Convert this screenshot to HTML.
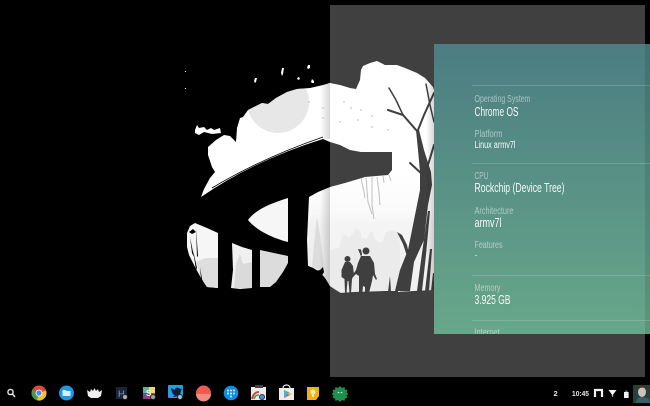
<!DOCTYPE html>
<html><head><meta charset="utf-8">
<style>
html,body{margin:0;padding:0;background:#000;width:650px;height:406px;overflow:hidden}
svg{display:block;font-family:"Liberation Sans",sans-serif}
</style></head>
<body>
<svg width="650" height="406" viewBox="0 0 650 406" xmlns="http://www.w3.org/2000/svg">
<defs>
<linearGradient id="sky" gradientUnits="userSpaceOnUse" x1="0" y1="175" x2="0" y2="295"><stop offset="0" stop-color="#fff"/><stop offset=".32" stop-color="#f8f8f8"/><stop offset=".4" stop-color="#f1f1f1"/><stop offset="1" stop-color="#ececec"/></linearGradient>
<linearGradient id="panel" x1="0" y1="0" x2="0" y2="1"><stop offset="0" stop-color="#4b7d82"/><stop offset="1" stop-color="#68a78a"/></linearGradient>
<linearGradient id="shade" x1="0" y1="0" x2="1" y2="0"><stop offset="0" stop-color="#000" stop-opacity="0"/><stop offset="1" stop-color="#000" stop-opacity=".16"/></linearGradient>
<clipPath id="pc"><rect x="434" y="44" width="216" height="290"/></clipPath>
<clipPath id="moon"><path d="M236 142L237 128 240 118 243 117 248 110 256 106 262 103 268 104 276 98 287 92 297 89 310 88 323 85 330 83 330 140 236 160Z"/></clipPath>
</defs>
<rect width="650" height="406" fill="#000"/>

<!-- wallpaper: upper white area -->
<path d="M201 197L204 189 210 178 215 172 212 167 208 155 208 147 216 140 224 135 230 136 236 142 237 128 240 118 243 117 248 110 256 106 262 103 268 104 276 98 287 92 297 89 310 88 323 85 330 83 340 85 350 88 356 89 360 80 361 70 363 66 370 63 377 61 385 65 397 65 405 68 417 73 425 78 433 87 434 90 434 175 388 175 392 170 392 152 361 152 350 150 340 145 330 142 323 139Q255 160 201 197Z" fill="#fff"/>
<circle cx="278" cy="102" r="31" fill="#e7e7e7" clip-path="url(#moon)"/>
<path d="M212 188Q262 158 323 137" fill="none" stroke="#000" stroke-width=".8"/>
<g fill="#fff">
<path d="M195 130L197 125 199 128 204 127 207 130 211 128 214 130 220 128 221 133 212 134 204 132 199 135 195 133Z"/>
<path d="M281 73l1-5 2 0-1 6-1 2zM307 68l1-3 2 0 0 3-2 1zM254 81l1-3 2 0-1 4-1 1zM297 78l2-1 1 2-2 1zM311 82l1-3 2 2 0 2-2 0z"/>
<rect x="185" y="71" width="1" height="1"/><rect x="185" y="88" width="1" height="1"/>
</g>

<!-- wallpaper: lower areas -->
<path d="M309 197L318 192 330 187 345 183 365 177 388 175 434 175 434 290 394 292 344 295 336 290 330 286 325 278 320 272 313 268 308 266 307 240Z" fill="url(#sky)"/>
<path d="M248 220C256 209 272 203 288 198L288 242C272 238 256 230 248 220Z" fill="#f6f6f6"/>
<path d="M187 233L190 226 195 223 207 228 218 233 218 288 207 287 201 278 195 267 189 255 187 247Z" fill="#f6f6f6"/>
<path d="M196 262L205 258 218 258 218 288 207 287 201 278Z" fill="#dedede"/>
<path d="M232 243L242 247 252 250 252 288 240 289 231 288 233 270Z" fill="#f0f0f0"/>
<path d="M234 288L236 264 240 254 243 264 252 262 252 288Z" fill="#dadada"/>
<path d="M260 250L274 253 288 256 288 263 283 272 276 282 270 287 260 287Z" fill="#dcdcdc"/>
<path d="M190 237l2 16 2 4-2-10ZM193 250l4 18-1 2ZM196 228l2 28-1 1ZM200 267l2 12 2 6-3-6Z" fill="#000"/>
<path d="M189 232l4-3 3 3-4 2Z" fill="#000"/>
<!-- city in window/fold -->
<path d="M312 267L314 245 317 217 320 235 322 250 324 272Z" fill="#dcdcdc"/>
<path d="M330 250L340 247 342 236 346 235 349 238 353 233 356 228 360 231 362 238 367 239 370 232 373 232 375 240 382 243 386 232 392 230 398 232 400 245 400 292 344 294 336 290 330 286Z" fill="#e4e4e4"/>
<path d="M308 266l5 2 3 3 4-1 3-3 1 5-3 5-4 2-3-6-6-4Z" fill="#000"/>

<!-- fold shadow -->
<rect x="320" y="84" width="10" height="55" fill="url(#shade)"/>
<rect x="320" y="186" width="10" height="98" fill="url(#shade)"/>

<!-- window dim -->
<rect x="330" y="5" width="315" height="372" fill="#fff" fill-opacity=".25"/>

<!-- vines -->
<g fill="none" stroke="#b0b0b0" stroke-width="1" opacity=".8">
<path d="M361 178l3 14 1 6M366 178l2 24 4 12M372 177l0 28 2 14M377 177l2 16 1 12M383 175l1 8M389 175l2 6"/>
</g>
<g fill="#d2d2d2">
<circle cx="344" cy="102" r="1"/><circle cx="351" cy="108" r="1"/><circle cx="361" cy="110" r="1"/><circle cx="372" cy="116" r="1"/><circle cx="358" cy="120" r="1"/><circle cx="340" cy="122" r="1"/><circle cx="372" cy="127" r="1"/><circle cx="388" cy="130" r="1"/><circle cx="309" cy="102" r="1"/><circle cx="323" cy="108" r="1"/><circle cx="323" cy="118" r="1"/>
</g>

<!-- tree -->
<g fill="#3f3f3f">
<path d="M395 291L400 270 408 250 415 215 420 190 420 172 418 150 416 130 419 130 424 150 431 172 432 185 428 205 424 240 414 262 410 291Z"/>
<path d="M417 291l5-38 6-42 2 0-4 44-4 36ZM425 291l5-42 2 0-3 42ZM431 291l2-18 1 0 0 18Z"/>
<path d="M397 232l5 3 5 10 3 14-3-3-4-12Z"/>
</g>
<g fill="none" stroke="#3f3f3f" stroke-linecap="round">
<path d="M417 131L403 115 388 110" stroke-width="2"/>
<path d="M403 115L396 100 389 88" stroke-width="1.500"/>
<path d="M418 130L424 115 434 93" stroke-width="2"/>
<path d="M426 84L430 105 434 122" stroke-width="1.500"/>
<path d="M410 163L423 175" stroke-width="2"/>
<path d="M434 145L428 165" stroke-width="2"/>
</g>
<!-- figures -->
<g fill="#3f3f3f">
<circle cx="347.500" cy="259" r="3"/>
<path d="M345 262l5 0 3 4 1 9-2 4-1 14-1.500 0-1-12-1 0-1 12-1.500 0-.5-14-3-2 0-7Z"/>
<circle cx="366" cy="251" r="3.500"/>
<path d="M358 249l3 .5 1 5-1 2Z"/>
<path d="M361 256l9 0 4 7 1 11 2 5-1 1-3-5-1 6-3 12-3 5-1 0 0-11-2-1-1 10-2 2-1 0 0-11 0-11-3-2-3 3-1-1 4-6 2-7Z"/>
<path d="M340 293l14-1 30-1 14 0 0 3-58 2Z"/>
<path d="M388 292l2-16 1 16Z"/>
</g>

<!-- panel -->
<rect x="426" y="84" width="8" height="206" fill="url(#shade)"/>
<rect x="434" y="44" width="216" height="290" fill="url(#panel)"/>
<rect x="645" y="44" width="5" height="290" fill="#000" opacity=".1"/>
<g stroke="#fff" stroke-opacity=".16" stroke-width="1">
<path d="M472 85.500H650M472 163.500H650M472 275.500H650M472 320.500H650"/>
</g>
<g clip-path="url(#pc)">
<g fill="#fff" fill-opacity=".5" font-size="10">
<text x="474.500" y="102" textLength="56" lengthAdjust="spacingAndGlyphs">Operating System</text>
<text x="474.500" y="137" textLength="28" lengthAdjust="spacingAndGlyphs">Platform</text>
<text x="474.500" y="179" textLength="14" lengthAdjust="spacingAndGlyphs">CPU</text>
<text x="474.500" y="214" textLength="39" lengthAdjust="spacingAndGlyphs">Architecture</text>
<text x="474.500" y="248" textLength="28" lengthAdjust="spacingAndGlyphs">Features</text>
<text x="474.500" y="291" textLength="26" lengthAdjust="spacingAndGlyphs">Memory</text>
<text x="474.500" y="335.500" textLength="25" lengthAdjust="spacingAndGlyphs">Internet</text>
</g>
<g fill="#fff" fill-opacity=".95" font-size="13">
<text x="474.500" y="116" textLength="44" lengthAdjust="spacingAndGlyphs">Chrome OS</text>
<text x="474.500" y="148" font-size="10" textLength="41" lengthAdjust="spacingAndGlyphs">Linux armv7l</text>
<text x="474.500" y="192" textLength="90" lengthAdjust="spacingAndGlyphs">Rockchip (Device Tree)</text>
<text x="474.500" y="227" textLength="27" lengthAdjust="spacingAndGlyphs">armv7l</text>
<text x="474.500" y="258" font-size="9" fill-opacity=".7">-</text>
<text x="474.500" y="304" textLength="36" lengthAdjust="spacingAndGlyphs">3.925 GB</text>
</g>
</g>

<!-- shelf icons -->
<g fill="none" stroke="#e8e8e8" stroke-width="1.400"><circle cx="10.500" cy="392" r="2.600"/><path d="M12.500 394l2.500 3"/></g>
<circle cx="39" cy="393" r="7.500" fill="#dd4a3b"/>
<path d="M39 393L32.500 389.500A7.500 7.500 0 0 0 37 400.300Z" fill="#3f9d4d"/>
<path d="M39 393L37 400.300A7.500 7.500 0 0 0 46 390.500Z" fill="#f0c02e"/>
<circle cx="39" cy="393" r="3.400" fill="#fff"/><circle cx="39" cy="393" r="2.600" fill="#4a8af0"/>
<circle cx="66.500" cy="393" r="7.500" fill="#1c97e0"/>
<path d="M62.500 390h3l1 1h4v5h-8Z" fill="#d8eefb"/>
<path d="M87 390l3 2 1-3 2 2 1.500-3 1.500 3 2-2 1 3 3-2-1 6-3 2h-7l-3-2Z" fill="#f0f0f0"/>
<rect x="116" y="387" width="11" height="12" fill="#17263a"/>
<text x="118" y="397" font-size="9" fill="#8fa0b4">H</text>
<circle cx="125" cy="397" r="3" fill="#222"/><circle cx="125" cy="397" r="2" fill="#a8b4b4"/>
<rect x="143" y="387" width="12" height="12" fill="#e8d96a"/>
<rect x="143" y="387" width="6" height="6" fill="#55b9a0"/>
<rect x="149" y="393" width="6" height="6" fill="#d23b6a"/>
<rect x="143" y="393" width="6" height="6" fill="#7a4a8a"/>
<text x="146" y="396" font-size="8" font-weight="bold" fill="#fff">S</text>
<circle cx="153" cy="397" r="3" fill="#222"/><circle cx="153" cy="397" r="2" fill="#8ab09a"/>
<rect x="168" y="385" width="15" height="13" rx="1" fill="#1f9fe6"/>
<path d="M171 388l4 2c0-3 4-3 5-1l2-.5-1 2c0 4-4 7-9 6 2 0 3-1 3-1-2-.5-3-3-4-7Z" fill="#0a2030"/>
<circle cx="180" cy="397" r="3" fill="#222"/><circle cx="180" cy="397" r="2" fill="#9fc0cc"/>
<circle cx="203.500" cy="393" r="7.500" fill="#ee5b4c"/>
<path d="M196 394h15a7.500 7.500 0 0 1-15 0Z" fill="#f28b80"/>
<circle cx="231" cy="393" r="7.300" fill="#0f8fe2"/>
<g fill="#d7eefc"><circle cx="228" cy="390.500" r="1"/><circle cx="231" cy="390.500" r="1"/><circle cx="234" cy="390.500" r="1"/><circle cx="228" cy="393.500" r="1"/><circle cx="231" cy="393.500" r="1"/><circle cx="234" cy="393.500" r="1"/><circle cx="231" cy="396.500" r="1"/></g>
<rect x="251" y="387" width="15" height="13" fill="#ececec"/>
<path d="M255 385l8 0 0 3-8 0Z" fill="#444"/>
<path d="M252 399c1-5 4-7 7-7" fill="none" stroke="#c74a3a" stroke-width="2"/>
<path d="M254 399c1-3 2-4 5-4" fill="none" stroke="#3f9d4d" stroke-width="1.500"/>
<circle cx="262" cy="397" r="3" fill="#333"/><circle cx="262" cy="397" r="2" fill="#4a8af0"/>
<rect x="279" y="388" width="15" height="12" fill="#ececec"/>
<path d="M283 388c0-4 7-4 7 0" fill="none" stroke="#eee" stroke-width="1.200"/>
<path d="M284 390v8l3.500-4Z" fill="#3bb5e8"/><path d="M284 390l6 3-2.500 1Z" fill="#4caf50"/><path d="M284 398l6-3-2.500-1Z" fill="#e04b3f"/><path d="M290 393l2 1-2 1-1.500-1Z" fill="#f5c12e"/>
<path d="M307 387h12v9l-3 4h-9Z" fill="#eeb214"/>
<circle cx="313" cy="392" r="2.600" fill="#f8e6b0"/><rect x="312" y="394" width="2" height="3" fill="#f8e6b0"/>
<path d="M340 386l2 2 2.500-1 .5 2.500 2.500.5-1 2.500 2 1.500-2 1.500 1 2.500-2.500.5-.5 2.500-2.500-1-2 2-2-2-2.500 1-.5-2.500-2.500-.5 1-2.500-2-1.500 2-1.500-1-2.500 2.500-.5.500-2.500 2.500 1Z" fill="#1f8f4d"/>
<circle cx="338.500" cy="392.500" r=".8" fill="#dff"/><circle cx="341.500" cy="392.500" r=".8" fill="#dff"/>

<!-- status -->
<g fill="#e8e8e8" font-size="7.500" font-weight="bold">
<text x="553.500" y="396">2</text>
<text x="572" y="396" textLength="17" lengthAdjust="spacingAndGlyphs">10:45</text>
</g>
<path d="M595 397v-7h7v7" fill="none" stroke="#f2f2f2" stroke-width="2.200"/>
<path d="M608.500 390h8l-4 5.500Z" fill="#f2f2f2"/><path d="M611.500 395.500h2l-1 1.500Z" fill="#f2f2f2"/>
<rect x="624" y="392" width="4.600" height="6" fill="#f2f2f2"/><rect x="625" y="390.500" width="2.600" height="1.500" fill="#666"/>
<rect x="633" y="385" width="17" height="18" fill="#24423c"/>
<path d="M636 403c0-5 3-6 6-6s7 1 8 4v2Z" fill="#3a5c66"/>
<ellipse cx="642" cy="392" rx="4" ry="5" fill="#cfc3b8"/>
<path d="M637 391c0-5 3-6 5-6s5 1 6 5c-2-2-6-3-8-2Z" fill="#40362f"/>
</svg>
</body></html>
